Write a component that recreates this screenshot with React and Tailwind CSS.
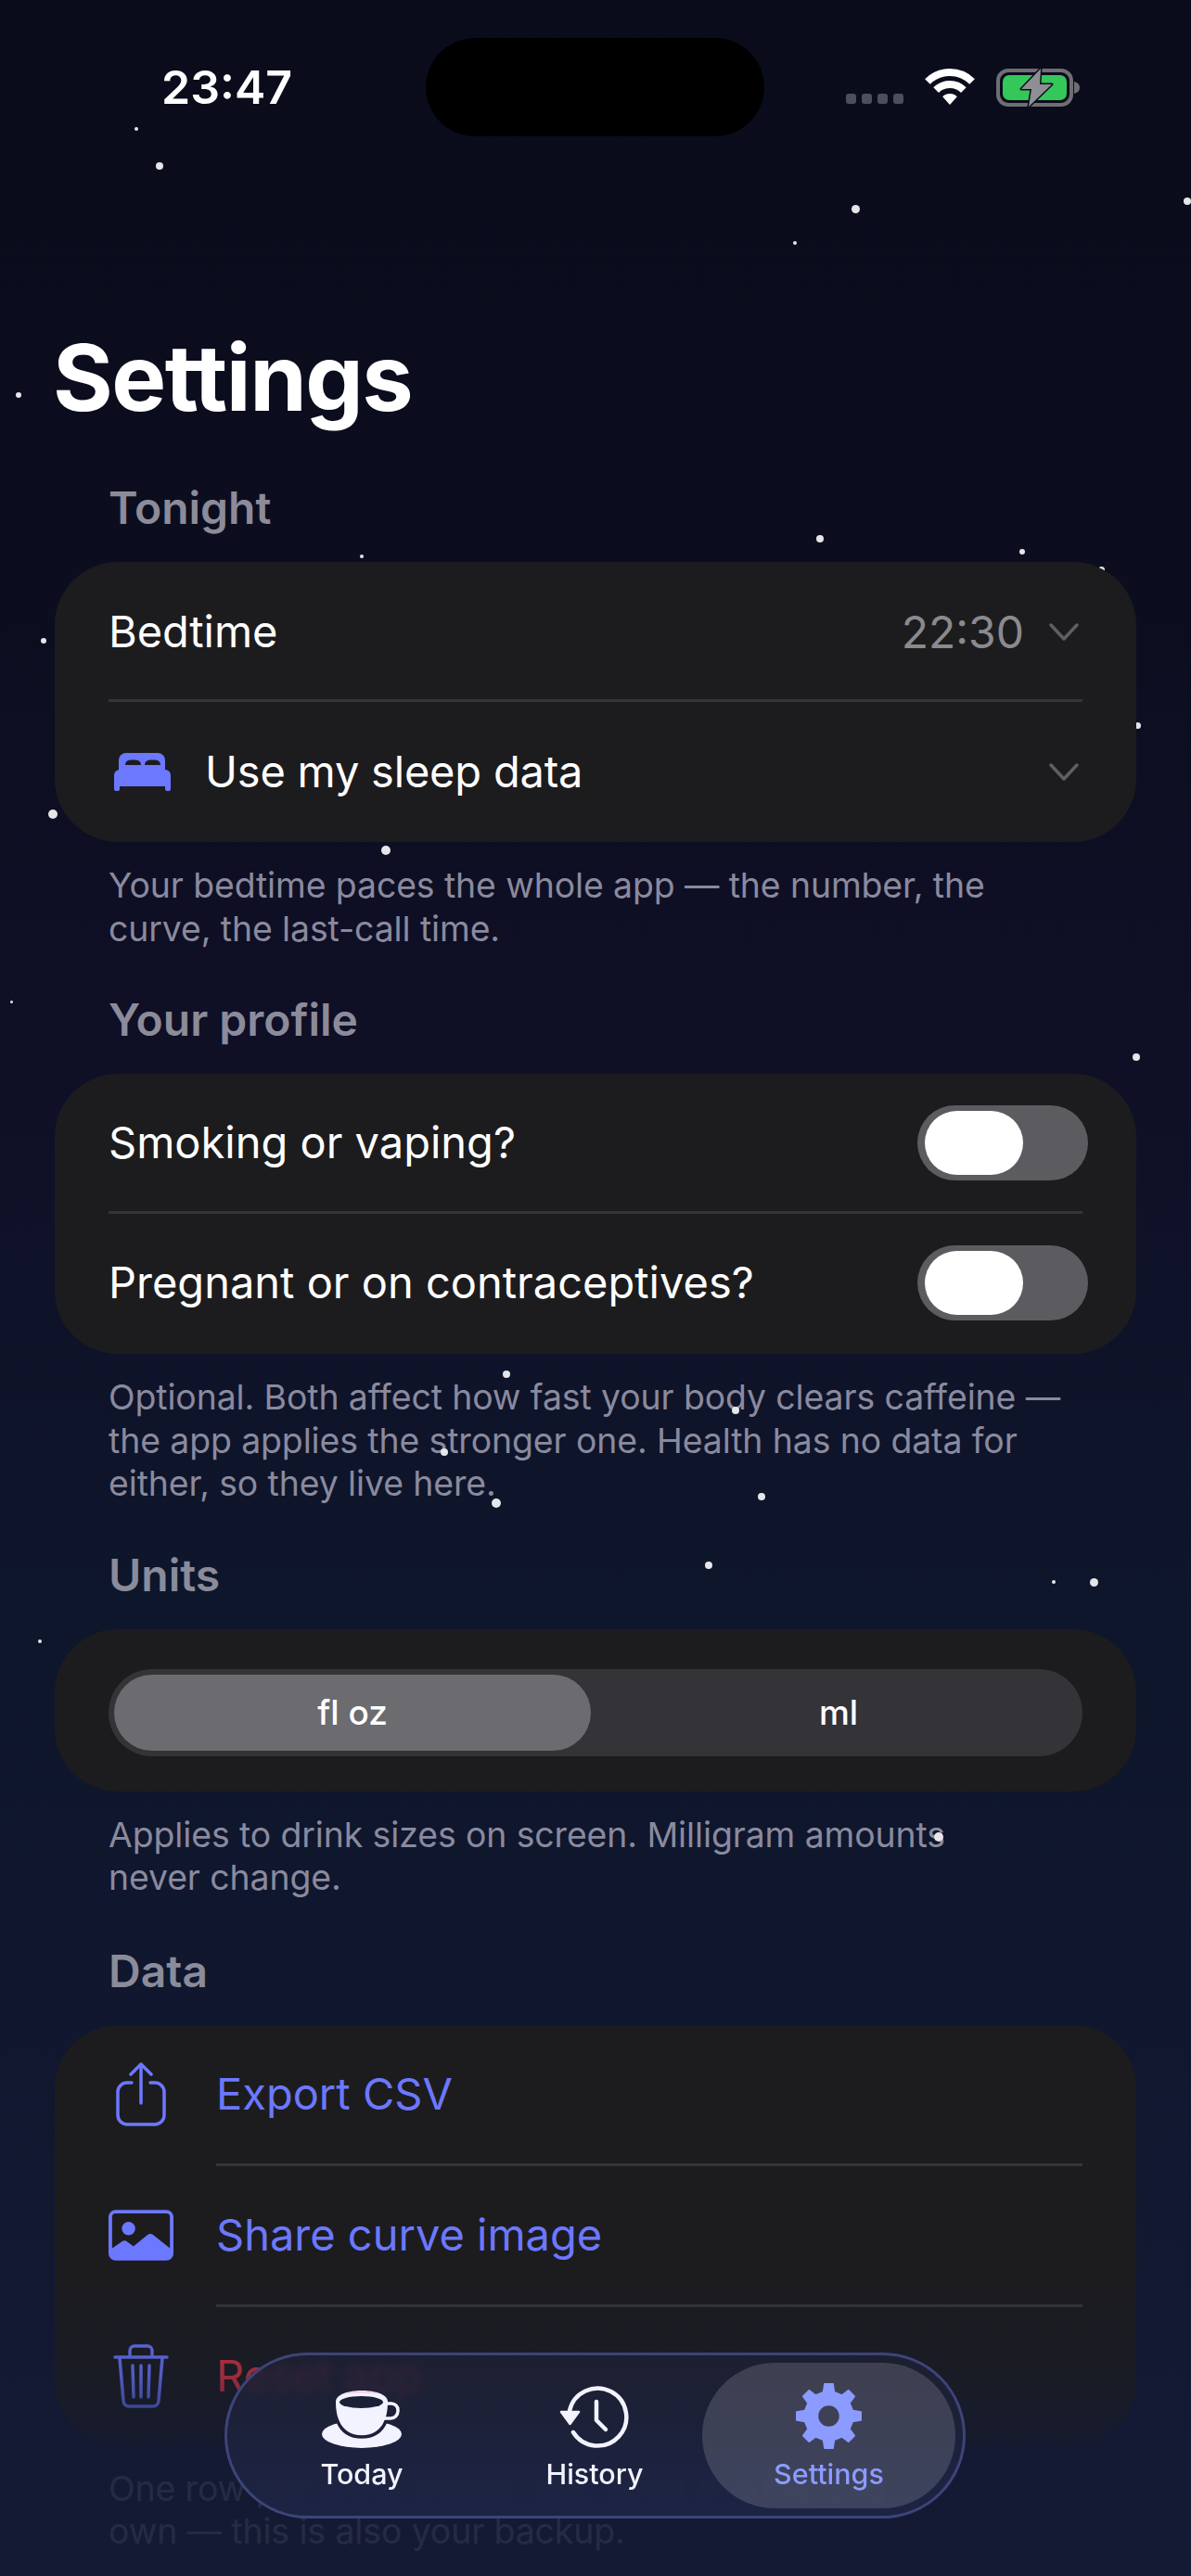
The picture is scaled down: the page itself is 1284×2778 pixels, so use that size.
import React from "react";

const STARS = [
  [147,139,2],[172,179,4],[922,225,4.5],[857,262,2],[1280,217,4],[20,426,3],
  [884,581,4],[390,600,2],[1102,595,3],[1187,614,3.5],[47,691,3],[1226,782,3.5],[57,878,5],[416,917,5],
  [12,1080,1.5],[1225,1140,4],[546,1482,4],[793,1521,4],[479,1566,4],[535,1621,5],[821,1614,4],
  [764,1688,4],[1136,1706,2],[1179,1706,4.5],[43,1770,2],[1012,1981,5],
];

function gearPath() {
  const c = 35.5, tip = 35, root = 26.5, hole = 12;
  const pt = (deg, r) => {
    const a = ((deg - 90) * Math.PI) / 180;
    return `${(c + r * Math.cos(a)).toFixed(2)} ${(c + r * Math.sin(a)).toFixed(2)}`;
  };
  let d = "";
  for (let i = 0; i < 8; i++) {
    const a = i * 45;
    d += `${i === 0 ? "M" : "L"}${pt(a - 13, root)} L${pt(a - 7.5, tip)} L${pt(a + 7.5, tip)} L${pt(a + 13, root)} `;
  }
  d += `Z M${c - hole} ${c} a${hole} ${hole} 0 1 0 ${hole * 2} 0 a${hole} ${hole} 0 1 0 ${-hole * 2} 0 Z`;
  return d;
}

const Chevron = () => (
  <svg width="32" height="19" viewBox="0 0 32 19" fill="none" stroke="#5f5f63" strokeWidth="3.5" strokeLinecap="round" strokeLinejoin="round">
    <path d="M2 2 L16 17 L30 2" />
  </svg>
);

const Wifi = () => (
  <svg width="56" height="40" viewBox="0 0 56 40" fill="none" stroke="#fff" strokeWidth="8">
    <path d="M3.96 13.96 A34 34 0 0 1 52.04 13.96" />
    <path d="M13.15 23.15 A21 21 0 0 1 42.85 23.15" />
    <path d="M28 39 L20.2 30.2 A11 11 0 0 1 35.8 30.2 Z" fill="#fff" stroke="none" />
  </svg>
);

const Battery = () => (
  <svg width="91" height="43" viewBox="0 0 91 43" fill="none">
    <rect x="2" y="3" width="79" height="37" rx="11" stroke="#6e6e73" strokeWidth="4" />
    <rect x="7" y="8" width="69" height="27" rx="7" fill="#34c759" />
    <path d="M84 15 c4 1 6 3 6 6.500 s-2 5.500 -6 6.500 Z" fill="#6e6e73" />
    <path d="M48 1 L27 23 L38 23 L35 42 L60 18 L47 18 Z" fill="#8e8e93" stroke="#0a0c1b" strokeWidth="3" strokeLinejoin="round" paintOrder="stroke" />
  </svg>
);

const Bed = () => (
  <svg width="61" height="41" viewBox="0 0 61 41" fill="#6c78ff">
    <path d="M5 19 V8 a8 8 0 0 1 8 -8 H47 a8 8 0 0 1 8 8 V19 Z" />
    <path d="M12 13 a5.500 5.500 0 0 1 5.500 -5.500 H23.500 a5.500 5.500 0 0 1 5.500 5.500 Z M33 13 a5.500 5.500 0 0 1 5.500 -5.500 H44.500 a5.500 5.500 0 0 1 5.500 5.500 Z" fill="#1c1c1e" />
    <path d="M0 36 V24 a6 6 0 0 1 6 -6 H55 a6 6 0 0 1 6 6 V36 Z" />
    <path d="M0 35 H6 V39 a2 2 0 0 1 -2 2 H2 a2 2 0 0 1 -2 -2 Z M55 35 H61 V39 a2 2 0 0 1 -2 2 H57 a2 2 0 0 1 -2 -2 Z" />
  </svg>
);

const Share = () => (
  <svg width="54" height="69" viewBox="0 0 54 69" fill="none" stroke="#6c78ff" strokeWidth="3.5" strokeLinecap="round" strokeLinejoin="round">
    <path d="M17 22 H12 a10 10 0 0 0 -10 10 V57 a10 10 0 0 0 10 10 H42 a10 10 0 0 0 10 -10 V32 a10 10 0 0 0 -10 -10 H37" />
    <path d="M27 3 V44" />
    <path d="M16 13 L27 2 L38 13" />
  </svg>
);

const ImageIcon = () => (
  <svg width="73" height="57" viewBox="0 0 73 57" fill="none">
    <rect x="2" y="2" width="69" height="53" rx="6" stroke="#6c78ff" strokeWidth="4" />
    <circle cx="22.500" cy="21" r="7.500" fill="#6c78ff" />
    <path d="M3 44 L16 35 Q18 34 20 35 L28 41 L44 28 Q47 26 50 28 L70 44 V52 a3 3 0 0 1 -3 3 H6 a3 3 0 0 1 -3 -3 Z" fill="#6c78ff" />
  </svg>
);

const Trash = () => (
  <svg width="60" height="69" viewBox="0 0 60 69" fill="none" stroke="#6c78ff" strokeWidth="3.500" strokeLinecap="round" strokeLinejoin="round">
    <path d="M18 12 V7 a5 5 0 0 1 5 -5 H37 a5 5 0 0 1 5 5 V12" />
    <path d="M2 14 H58" />
    <path d="M7 15 L11 61 a6 6 0 0 0 6 6 H43 a6 6 0 0 0 6 -6 L53 15" />
    <path d="M21 23 L22 57 M30 23 V57 M39 23 L38 57" />
  </svg>
);

const Cup = () => (
  <svg width="86" height="64" viewBox="0 0 86 64">
    <ellipse cx="43" cy="48" rx="43" ry="15" fill="#f2f3ff" />
    <path d="M17 34 Q24 51 43 51 Q62 51 69 34" fill="none" stroke="#1d2138" strokeWidth="3.500" strokeLinecap="round" />
    <path d="M15 13 C15 -3 71 -3 71 13 C71 30 66 48 43 48 C20 48 15 30 15 13 Z" fill="#f2f3ff" />
    <path d="M70 15 h5 a7 7 0 0 1 7 7 v1 a8 8 0 0 1 -8 8 h-7" fill="none" stroke="#f2f3ff" strokeWidth="3.500" />
    <ellipse cx="42.500" cy="13.500" rx="23.500" ry="6.500" fill="#1d2138" />
    <path d="M22 5 Q43 -2 64 5 Q43 2 22 5 Z" fill="#f8d0e0" />
  </svg>
);

const HistoryIcon = () => (
  <svg width="76" height="68" viewBox="0 0 76 68" fill="none" stroke="#f2f3ff" strokeWidth="4.500" strokeLinecap="round" strokeLinejoin="round">
    <path d="M11 27 A31 31 0 1 1 15 50" />
    <path d="M2 28 H21 L11.500 41 Z" fill="#f2f3ff" strokeWidth="2.500" />
    <path d="M40 17 V37 L50 47" />
  </svg>
);

const Gear = () => (
  <svg width="71" height="71" viewBox="0 0 71 71">
    <path d={gearPath()} fill="#8c9bff" fillRule="evenodd" stroke="#8c9bff" strokeWidth="1.500" strokeLinejoin="round" />
  </svg>
);

const Toggle = () => (
  <div className="flex items-center w-[184px] h-[81px] rounded-full bg-[#5c5c60] pl-[8px]">
    <div className="w-[106px] h-[69px] rounded-full bg-white" />
  </div>
);

const Divider = ({ className }) => <div className={`h-[3px] bg-[#353537] ${className}`} />;

const Section = ({ title, note, children, className = "" }) => (
  <section className={`flex flex-col ${className}`}>
    <h2 className="px-[117px] h-[52px] leading-[52px] text-[48px] font-semibold text-[#8b8b9a]">{title}</h2>
    <div className="relative z-[2] mt-[32px] mx-[59px] rounded-[68px] bg-[#1c1c1e]">{children}</div>
    <p className="mt-[24px] pl-[117px] pr-[90px] text-[37.400px] leading-[46.500px] tracking-[-0.1px] text-[#8a8a9e]">{note}</p>
  </section>
);

const Row = ({ children, className }) => (
  <div className={`flex items-center px-[58px] ${className}`}>{children}</div>
);

const DataRow = ({ icon, color, children }) => (
  <div className="flex items-center h-[149px] pl-[58px] pr-[58px]">
    <div className="flex items-center justify-center w-[116px] pr-[46px]">{icon}</div>
    <span className={`text-[47px] ${color}`}>{children}</span>
  </div>
);

const Tab = ({ icon, label, active, className }) => (
  <div className={`flex flex-col items-center shrink-0 ${className}`}>
    <div className="flex items-end justify-center h-[74px]">{icon}</div>
    <span className={`mt-[9px] text-[30.500px] leading-[36px] font-medium ${active ? "text-[#8c9bff]" : "text-[#f2f3ff]"}`}>{label}</span>
  </div>
);

export default function App() {
  return (
    <div
      className="relative w-[1284px] h-[2778px] overflow-hidden text-white bg-[linear-gradient(180deg,#0a0c1b_0%,#0c0e20_25%,#0f0f26_40%,#0e162b_62%,#10172f_80%,#151a33_100%)]"
      style={{ fontFamily: "Inter, 'Noto Sans', sans-serif" }}
    >
      {STARS.map(([x, y, r], i) => (
        <div
          key={i}
          className="absolute z-[1] rounded-full bg-[#e6e6ea]"
          style={{ left: x - r, top: y - r, width: r * 2, height: r * 2 }}
        />
      ))}

      {/* Status bar */}
      <header className="flex items-center pt-[41px] h-[147px]">
        <div className="w-[459px] pl-[174px] text-[50px] font-semibold leading-none">23:47</div>
        <div className="w-[365px] h-[106px] rounded-[53px] bg-black" />
        <div className="flex items-center pl-[88px]">
          <div className="flex gap-[6px] pt-[25px]">
            {[0, 1, 2, 3].map((i) => (
              <div key={i} className="w-[11px] h-[11px] rounded-[3px] bg-[#4c4e5c]" />
            ))}
          </div>
          <div className="ml-[22px]"><Wifi /></div>
          <div className="ml-[22px]"><Battery /></div>
        </div>
      </header>

      <h1 className="mt-[205px] pl-[57px] text-[99px] leading-[110px] font-bold tracking-[-1.500px]">Settings</h1>

      <main className="mt-[60px] flex flex-col gap-[49px]">
        <Section title="Tonight" note={<>Your bedtime paces the whole app — the number, the<br />curve, the last-call time.</>}>
          <Row className="h-[148px] pt-[3px]">
            <span className="text-[47px] tracking-[-0.1px] flex-1">Bedtime</span>
            <span className="text-[48px] text-[#8a8a8e] mr-[27px]">22:30</span>
            <div className="mr-[4px]"><Chevron /></div>
          </Row>
          <Divider className="mx-[58px]" />
          <Row className="h-[151px]">
            <div className="ml-[6px] mr-[37px]"><Bed /></div>
            <span className="text-[47px] tracking-[-0.2px] flex-1">Use my sleep data</span>
            <div className="mr-[4px]"><Chevron /></div>
          </Row>
        </Section>

        <Section title="Your profile" note={<>Optional. Both affect how fast your body clears caffeine — the app applies the stronger one. Health has no data for either, so they live here.</>}>
          <Row className="h-[148px]">
            <span className="text-[47px] flex-1">Smoking or vaping?</span>
            <div className="-mr-[6px]"><Toggle /></div>
          </Row>
          <Divider className="mx-[58px]" />
          <Row className="h-[151px] pb-[2px]">
            <span className="text-[47px] flex-1">Pregnant or on contraceptives?</span>
            <div className="-mr-[6px]"><Toggle /></div>
          </Row>
        </Section>

        <Section title="Units" note={<>Applies to drink sizes on screen. Milligram amounts<br />never change.</>}>
          <div className="px-[58px] pt-[43px] pb-[38px]">
            <div className="flex items-center h-[94px] rounded-full bg-[#333338] p-[6px]">
              <div className="flex items-center justify-center w-[514px] h-[82px] rounded-full bg-[#6b6b70] text-[37px] font-medium">fl oz</div>
              <div className="flex items-center justify-center flex-1 h-[82px] pl-[10px] text-[37px] font-medium">ml</div>
            </div>
          </div>
        </Section>

        <Section className="mt-[2px]" title="Data" note={<>One row per drink (name, mg, time) in a file you<br />own — this is also your backup.</>}>
          <DataRow icon={<Share />} color="text-[#6c78ff]">Export CSV</DataRow>
          <Divider className="ml-[174px] mr-[58px]" />
          <DataRow icon={<ImageIcon />} color="text-[#6c78ff]">Share curve image</DataRow>
          <Divider className="ml-[174px] mr-[58px]" />
          <DataRow icon={<Trash />} color="text-[#d9343f]">Reset app</DataRow>
        </Section>
      </main>

      {/* Bottom fade */}
      <div className="absolute z-[3] inset-x-0 bottom-0 h-[340px] bg-[linear-gradient(180deg,rgba(20,26,51,0)_0%,rgba(20,26,51,0.3)_36%,rgba(20,26,51,0.85)_62%,rgba(20,26,51,0.85)_100%)]" />

      {/* Tab bar */}
      <nav className="absolute z-[4] left-[242px] top-[2537px] flex items-center w-[799px] h-[179px] pl-[28px] rounded-full border-[3px] border-[#3d4478] bg-[linear-gradient(180deg,rgba(30,33,52,0.8),rgba(30,38,72,0.8))] backdrop-blur-[4px]">
        <Tab className="w-[234px]" icon={<Cup />} label="Today" />
        <Tab className="w-[232px] ml-[18px]" icon={<HistoryIcon />} label="History" />
        <div className="flex items-center justify-center shrink-0 w-[273px] h-[157px] rounded-full bg-white/15">
          <Tab icon={<Gear />} label="Settings" active />
        </div>
      </nav>
    </div>
  );
}
